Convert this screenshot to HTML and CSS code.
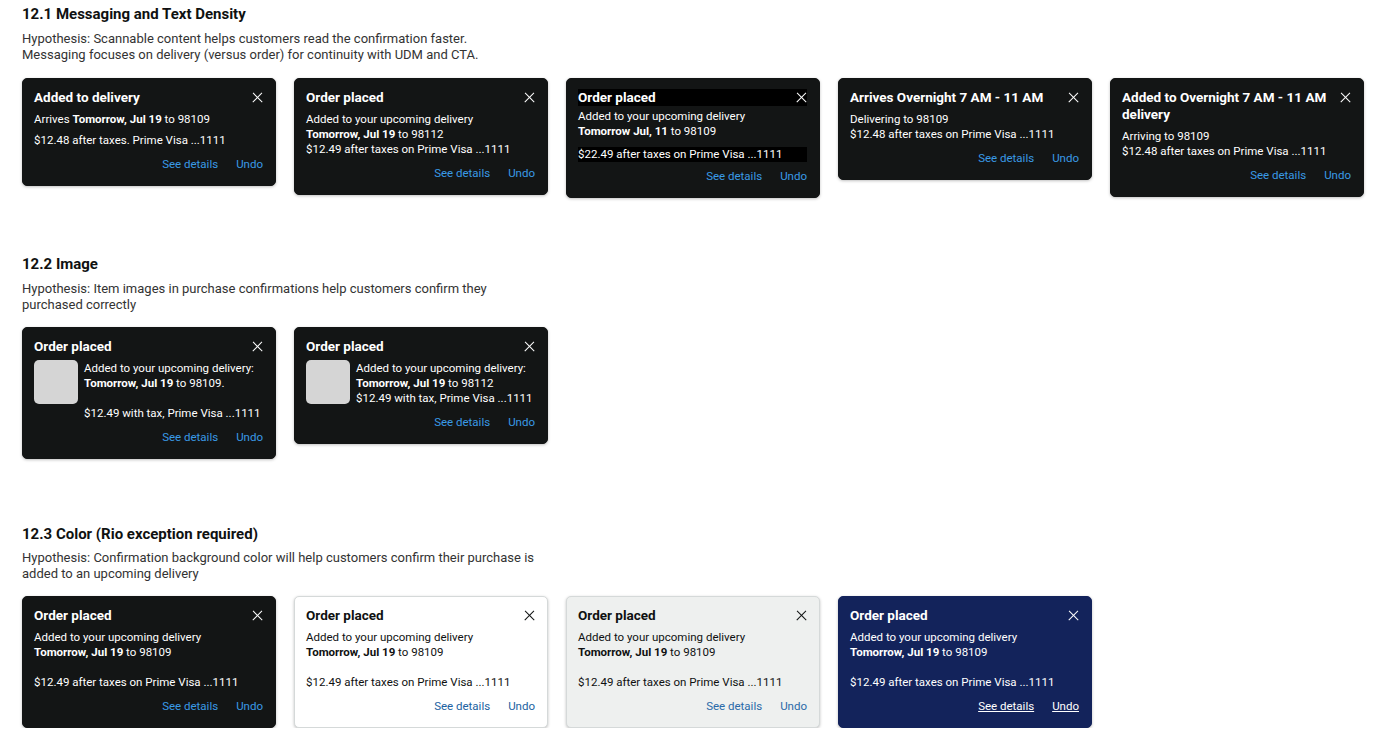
FILE: index.html
```html
<!DOCTYPE html>
<html lang="en">
<head>
    <meta charset="UTF-8">
    <meta name="viewport" content="width=device-width, initial-scale=1.0">
    <title>Purchase Confirmation Explorations</title>
    <link rel="stylesheet" href="styles.css">
</head>
<body>
    <div id="page">
        <section class="study study-first">
            <h2>12.1 Messaging and Text Density</h2>
            <p class="hypothesis">Hypothesis: Scannable content helps customers read the confirmation faster.<br>Messaging focuses on delivery (versus order) for continuity with UDM and CTA.</p>
            <div class="toast-row">
                <div class="toast">
                    <div class="toast-head"><span class="toast-title">Added to delivery</span><span class="close"></span></div>
                    <div class="toast-body">
                        <div>Arrives <b>Tomorrow, Jul 19</b> to 98109</div>
                        <div class="gap-sm">$12.48 after taxes. Prime Visa ...1111</div>
                    </div>
                    <div class="toast-actions"><a>See details</a><a>Undo</a></div>
                </div>
                <div class="toast">
                    <div class="toast-head"><span class="toast-title">Order placed</span><span class="close"></span></div>
                    <div class="toast-body">
                        <div>Added to your upcoming delivery</div>
                        <div><b>Tomorrow, Jul 19</b> to 98112</div>
                        <div>$12.49 after taxes on Prime Visa ...1111</div>
                    </div>
                    <div class="toast-actions"><a>See details</a><a>Undo</a></div>
                </div>
                <div class="toast toast-redacted">
                    <div class="toast-head masked"><span class="toast-title">Order placed</span><span class="close"></span></div>
                    <div class="toast-body">
                        <div>Added to your upcoming delivery</div>
                        <div><b>Tomorrow Jul, 11</b> to 98109</div>
                        <div class="masked price-masked">$22.49 after taxes on Prime Visa ...1111</div>
                    </div>
                    <div class="toast-actions"><a>See details</a><a>Undo</a></div>
                </div>
                <div class="toast">
                    <div class="toast-head"><span class="toast-title">Arrives Overnight 7 AM - 11 AM</span><span class="close"></span></div>
                    <div class="toast-body">
                        <div>Delivering to 98109</div>
                        <div>$12.48 after taxes on Prime Visa ...1111</div>
                    </div>
                    <div class="toast-actions"><a>See details</a><a>Undo</a></div>
                </div>
                <div class="toast">
                    <div class="toast-head"><span class="toast-title">Added to Overnight 7 AM - 11 AM delivery</span><span class="close"></span></div>
                    <div class="toast-body">
                        <div>Arriving to 98109</div>
                        <div>$12.48 after taxes on Prime Visa ...1111</div>
                    </div>
                    <div class="toast-actions"><a>See details</a><a>Undo</a></div>
                </div>
            </div>
        </section>

        <section class="study study-second">
            <h2>12.2 Image</h2>
            <p class="hypothesis">Hypothesis: Item images in purchase confirmations help customers confirm they purchased correctly</p>
            <div class="toast-row">
                <div class="toast">
                    <div class="toast-head"><span class="toast-title">Order placed</span><span class="close"></span></div>
                    <div class="toast-media">
                        <div class="thumb"></div>
                        <div class="toast-body">
                            <div>Added to your upcoming delivery:</div>
                            <div><b>Tomorrow, Jul 19</b> to 98109.</div>
                            <div class="gap-md">$12.49 with tax, Prime Visa ...1111</div>
                        </div>
                    </div>
                    <div class="toast-actions"><a>See details</a><a>Undo</a></div>
                </div>
                <div class="toast">
                    <div class="toast-head"><span class="toast-title">Order placed</span><span class="close"></span></div>
                    <div class="toast-media">
                        <div class="thumb"></div>
                        <div class="toast-body">
                            <div>Added to your upcoming delivery:</div>
                            <div><b>Tomorrow, Jul 19</b> to 98112</div>
                            <div>$12.49 with tax, Prime Visa ...1111</div>
                        </div>
                    </div>
                    <div class="toast-actions"><a>See details</a><a>Undo</a></div>
                </div>
            </div>
        </section>

        <section class="study study-third">
            <h2>12.3 Color (Rio exception required)</h2>
            <p class="hypothesis">Hypothesis: Confirmation background color will help customers confirm their purchase is added to an upcoming delivery</p>
            <div class="toast-row">
                <div class="toast">
                    <div class="toast-head"><span class="toast-title">Order placed</span><span class="close"></span></div>
                    <div class="toast-body">
                        <div>Added to your upcoming delivery</div>
                        <div><b>Tomorrow, Jul 19</b> to 98109</div>
                        <div class="gap-lg">$12.49 after taxes on Prime Visa ...1111</div>
                    </div>
                    <div class="toast-actions"><a>See details</a><a>Undo</a></div>
                </div>
                <div class="toast toast-white">
                    <div class="toast-head"><span class="toast-title">Order placed</span><span class="close"></span></div>
                    <div class="toast-body">
                        <div>Added to your upcoming delivery</div>
                        <div><b>Tomorrow, Jul 19</b> to 98109</div>
                        <div class="gap-lg">$12.49 after taxes on Prime Visa ...1111</div>
                    </div>
                    <div class="toast-actions"><a>See details</a><a>Undo</a></div>
                </div>
                <div class="toast toast-grey">
                    <div class="toast-head"><span class="toast-title">Order placed</span><span class="close"></span></div>
                    <div class="toast-body">
                        <div>Added to your upcoming delivery</div>
                        <div><b>Tomorrow, Jul 19</b> to 98109</div>
                        <div class="gap-lg">$12.49 after taxes on Prime Visa ...1111</div>
                    </div>
                    <div class="toast-actions"><a>See details</a><a>Undo</a></div>
                </div>
                <div class="toast toast-navy">
                    <div class="toast-head"><span class="toast-title">Order placed</span><span class="close"></span></div>
                    <div class="toast-body">
                        <div>Added to your upcoming delivery</div>
                        <div><b>Tomorrow, Jul 19</b> to 98109</div>
                        <div class="gap-lg">$12.49 after taxes on Prime Visa ...1111</div>
                    </div>
                    <div class="toast-actions"><a>See details</a><a>Undo</a></div>
                </div>
            </div>
        </section>
    </div>
</body>
</html>
```

FILE: styles.css
```css
body {
    margin: 0;
    background-color: #ffffff;
    color: #0f1111;
    font-family: Roboto, "Noto Sans", sans-serif;
}
#page {
    padding: 5px 22px 0 22px;
}
h2 {
    margin: 0;
    font-size: 15px;
    line-height: 18px;
    font-weight: 700;
}
.hypothesis {
    margin: 8px 0 14px 0;
    max-width: 520px;
    font-size: 13px;
    line-height: 16px;
    color: #333333;
}
.study-first .hypothesis {
    margin-bottom: 15px;
}
.study-third .hypothesis {
    margin-top: 7px;
}
.study-second {
    margin-top: 57px;
}
.study-third {
    margin-top: 66px;
}
.toast-row {
    display: flex;
    align-items: flex-start;
    gap: 18px;
}
.toast {
    width: 254px;
    box-sizing: border-box;
    padding: 10px 12px 13px 11px;
    background-color: #131515;
    color: #ffffff;
    border: 1px solid #131515;
    border-radius: 5px;
    box-shadow: 0 1px 3px rgba(0, 0, 0, 0.25);
}
.toast-head {
    display: flex;
    justify-content: space-between;
    align-items: flex-start;
    gap: 8px;
    margin-bottom: 6px;
}
.toast-title {
    font-size: 13.5px;
    line-height: 17px;
    font-weight: 700;
}
.close {
    position: relative;
    flex: none;
    width: 11px;
    height: 11px;
    margin-top: 3px;
}
.close::before,
.close::after {
    content: "";
    position: absolute;
    left: -1px;
    top: 5px;
    width: 13px;
    height: 1.4px;
    background-color: currentColor;
    transform: rotate(45deg);
}
.close::after {
    transform: rotate(-45deg);
}
.toast-body {
    font-size: 11.5px;
    line-height: 15px;
}
.toast-body b {
    font-weight: 700;
}
.gap-sm {
    margin-top: 6px;
}
.gap-md {
    margin-top: 15px;
}
.gap-lg {
    margin-top: 15px;
}
.toast-actions {
    display: flex;
    justify-content: flex-end;
    gap: 18px;
    margin-top: 8px;
    font-size: 11.5px;
    line-height: 16px;
}
.toast-actions a {
    color: #3a9ae6;
    cursor: pointer;
}
.toast-redacted .masked {
    background-color: #000000;
}
.toast-redacted .toast-head {
    margin-bottom: 3px;
}
.toast-redacted .toast-actions {
    margin-top: 6px;
}
.price-masked {
    margin-top: 8px;
}
.toast-media {
    display: flex;
    gap: 6px;
}
.thumb {
    flex: none;
    width: 44px;
    height: 44px;
    margin-top: -1px;
    border-radius: 5px;
    background-color: #d5d5d5;
}
.toast-white {
    background-color: #ffffff;
    color: #0f1111;
    border-color: #d5d9d9;
}
.toast-white .toast-actions a {
    color: #2162a1;
}
.toast-grey {
    background-color: #eef0ef;
    color: #0f1111;
    border-color: #d5d9d9;
}
.toast-grey .toast-actions a {
    color: #2a6aa8;
}
.toast-navy {
    background-color: #13235b;
    border-color: #13235b;
}
.toast-navy .toast-actions a {
    color: #ffffff;
    text-decoration: underline;
}
```
